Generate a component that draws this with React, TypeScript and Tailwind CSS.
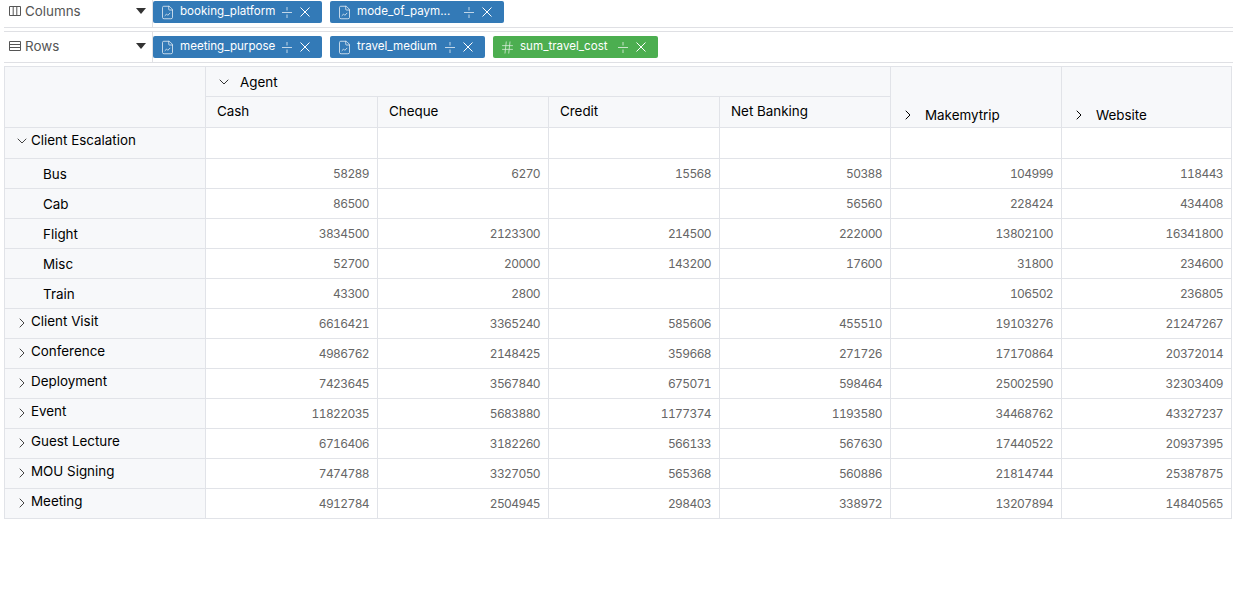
import { ChevronDown, ChevronRight, FileChartLine, Hash } from "lucide-react";

const FONT = "font-['Inter','Liberation_Sans',sans-serif]";

const GRID = "grid grid-cols-[201px_172px_171px_171px_171px_171px_170px]";

type Row = { label: string; child?: boolean; values: string[] };

const ROWS: Row[] = [
  { label: "Bus", child: true, values: ["58289", "6270", "15568", "50388", "104999", "118443"] },
  { label: "Cab", child: true, values: ["86500", "", "", "56560", "228424", "434408"] },
  { label: "Flight", child: true, values: ["3834500", "2123300", "214500", "222000", "13802100", "16341800"] },
  { label: "Misc", child: true, values: ["52700", "20000", "143200", "17600", "31800", "234600"] },
  { label: "Train", child: true, values: ["43300", "2800", "", "", "106502", "236805"] },
  { label: "Client Visit", values: ["6616421", "3365240", "585606", "455510", "19103276", "21247267"] },
  { label: "Conference", values: ["4986762", "2148425", "359668", "271726", "17170864", "20372014"] },
  { label: "Deployment", values: ["7423645", "3567840", "675071", "598464", "25002590", "32303409"] },
  { label: "Event", values: ["11822035", "5683880", "1177374", "1193580", "34468762", "43327237"] },
  { label: "Guest Lecture", values: ["6716406", "3182260", "566133", "567630", "17440522", "20937395"] },
  { label: "MOU Signing", values: ["7474788", "3327050", "565368", "560886", "21814744", "25387875"] },
  { label: "Meeting", values: ["4912784", "2504945", "298403", "338972", "13207894", "14840565"] },
];

function DragIcon() {
  return (
    <svg width="10" height="13" viewBox="0 0 10 13" fill="none" stroke="currentColor" strokeWidth="1" className="opacity-70">
      <path d="M0 6.5h10M5 1v3.5M5 8.5V12" />
    </svg>
  );
}

function CloseIcon() {
  return (
    <svg width="10" height="10" viewBox="0 0 10 10" fill="none" stroke="currentColor" strokeWidth="1">
      <path d="M.5.5l9 9M9.5.5l-9 9" />
    </svg>
  );
}

function ColumnsIcon() {
  return (
    <svg width="12" height="10" viewBox="0 0 12 10" fill="none" stroke="#555" strokeWidth="1">
      <path d="M.5.5h11v9H.5zM4.2.5v9M7.8.5v9" />
    </svg>
  );
}

function RowsIcon() {
  return (
    <svg width="12" height="10" viewBox="0 0 12 10" fill="none" stroke="#555" strokeWidth="1">
      <path d="M.5.5h11v9H.5zM.5 3.5h11M.5 6.5h11" />
    </svg>
  );
}

function Pill({ name, width, numeric }: { name: string; width: string; numeric?: boolean }) {
  return (
    <div className={`flex h-[22px] items-center rounded-[2px] pl-[7px] pr-[12px] text-[11.6px] text-white ${width} ${numeric ? "bg-[#4cae50]" : "bg-[#337ab7]"}`}>
      {numeric ? (
        <Hash size={15} strokeWidth={1.25} className="shrink-0 opacity-80" />
      ) : (
        <FileChartLine size={15} strokeWidth={1.25} className="shrink-0 opacity-90" />
      )}
      <span className="ml-[5px] whitespace-nowrap">{name}</span>
      <span className="ml-auto">
        <DragIcon />
      </span>
      <span className="ml-[8px]">
        <CloseIcon />
      </span>
    </div>
  );
}

function ShelfLabel({ label, icon, className }: { label: string; icon: React.ReactNode; className: string }) {
  return (
    <div className={`flex w-[149px] shrink-0 items-center self-stretch border-r border-[#dfe0e4] pl-[5px] pr-[6px] text-[13.4px] text-[#555] ${className}`}>
      {icon}
      <span className="ml-[4px]">{label}</span>
      <span className="ml-auto h-0 w-0 border-x-[5px] border-t-[6px] border-x-transparent border-t-[#333]" />
    </div>
  );
}

function HeadCell({ children, className = "" }: { children?: React.ReactNode; className?: string }) {
  return <div className={`flex border-r border-b border-[#e1e3e8] bg-[#f7f8fa] text-black ${className}`}>{children}</div>;
}

export default function App() {
  return (
    <div className={`h-[595px] w-[1233px] overflow-hidden bg-white ${FONT}`}>
      <div className="ml-[4px] flex h-[28px] items-start border-b border-[#dfe0e4]">
        <ShelfLabel label="Columns" icon={<ColumnsIcon />} className="pb-[5px]" />
        <div className="flex gap-2 pt-[1px]">
          <Pill name="booking_platform" width="w-[169px]" />
          <Pill name="mode_of_paym..." width="w-[174px]" />
        </div>
      </div>
      <div className="ml-[4px] mt-[3px] flex h-[32px] items-center border-y border-[#dfe0e4]">
        <ShelfLabel label="Rows" icon={<RowsIcon />} className="pb-[2px]" />
        <div className="flex gap-2">
          <Pill name="meeting_purpose" width="w-[169px]" />
          <Pill name="travel_medium" width="w-[155px]" />
          <Pill name="sum_travel_cost" width="w-[165px]" numeric />
        </div>
      </div>
      <div className={`ml-[4px] mt-[3px] w-[1228px] border-t border-l border-[#e1e3e8] ${GRID} grid-rows-[30px_31px_31px] auto-rows-[30px] text-[13.4px]`}>
        <HeadCell className="row-span-2" />
        <HeadCell className="col-span-4 items-center pl-[10px] pt-[1px]">
          <ChevronDown size={16} strokeWidth={1.5} className="text-[#333]" />
          <span className="ml-[8px]">Agent</span>
        </HeadCell>
        <HeadCell className="row-span-2 items-end pb-[2px] pl-[9px] text-[#333]">
          <span className="flex items-center">
            <ChevronRight size={16} strokeWidth={1.5} />
            <span className="ml-[9px]">Makemytrip</span>
          </span>
        </HeadCell>
        <HeadCell className="row-span-2 items-end pb-[2px] pl-[9px] text-[#333]">
          <span className="flex items-center">
            <ChevronRight size={16} strokeWidth={1.5} />
            <span className="ml-[9px]">Website</span>
          </span>
        </HeadCell>
        {["Cash", "Cheque", "Credit", "Net Banking"].map((name) => (
          <HeadCell key={name} className="items-center pb-[1px] pl-[11px]">
            {name}
          </HeadCell>
        ))}

        <HeadCell className="items-start pl-[9px] pt-[2px]">
          <ChevronDown size={16} strokeWidth={1.5} className="mt-[3px] text-[#444]" />
          <span className="ml-[1px]">Client Escalation</span>
        </HeadCell>
        {[0, 1, 2, 3, 4, 5].map((i) => (
          <div key={i} className="border-r border-b border-[#e1e3e8]" />
        ))}

        {ROWS.map((row) => (
          <div key={row.label} className="contents">
            {row.child ? (
              <HeadCell className="items-center pl-[38px] pt-[1px]">{row.label}</HeadCell>
            ) : (
              <HeadCell className="items-start pl-[9px] pt-[2px]">
                <ChevronRight size={16} strokeWidth={1.5} className="mt-[4px] text-[#444]" />
                <span className="ml-[1px]">{row.label}</span>
              </HeadCell>
            )}
            {row.values.map((v, i) => (
              <div key={i} className="flex items-center justify-end border-r border-b border-[#e1e3e8] pr-[8px] text-[12px] tracking-[-0.6px] tabular-nums text-[#666]">
                {v}
              </div>
            ))}
          </div>
        ))}
      </div>
    </div>
  );
}
